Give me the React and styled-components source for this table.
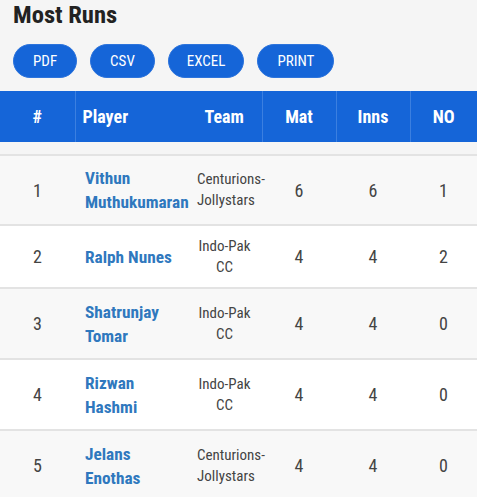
import React from "react";
import styled, { createGlobalStyle } from "styled-components";

const Global = createGlobalStyle`
  html, body { margin: 0; padding: 0; background: #f5f5f5; }
  body { font-family: Roboto, "Liberation Sans", sans-serif; font-stretch: 75%; }
`;

const Page = styled.div`
  width: 477px;
  overflow: hidden;
`;

const Title = styled.h2`
  margin: 0;
  padding: 0 0 0 13px;
  font-size: 24.6px;
  line-height: 29px;
  font-weight: 700;
  color: #222;
`;

const Toolbar = styled.div`
  display: flex;
  gap: 13px;
  padding: 15px 0 0 13px;
  height: 34px;
`;

const Btn = styled.button`
  height: 34px;
  padding: 0 ${(p) => p.$px}px;
  border-radius: 17px;
  border: 1px solid #2d74dc;
  background: #1565d8;
  color: #fff;
  font-family: inherit;
  font-stretch: 75%;
  font-size: 15px;
`;

const Table = styled.table`
  margin-top: 13px;
  width: 477px;
  border-collapse: collapse;
  table-layout: fixed;
`;

const Th = styled.th`
  background: #1565d8;
  color: #fff;
  height: 51px;
  padding: 0 ${(p) => (p.$align === "left" ? "7px" : "0")};
  font-size: 18px;
  font-weight: 700;
  text-align: ${(p) => p.$align || "center"};
  border-left: ${(p) => (p.$line ? "1px solid #3b7fe0" : "none")};
`;

const Spacer = styled.tr`
  height: 13px;
  td { border-bottom: 2px solid #e3e3e3; padding: 0; }
`;

const Row = styled.tr`
  background: ${(p) => (p.$odd ? "#f8f8f8" : "#ffffff")};
  height: ${(p) => p.$h}px;
  td { border-bottom: 2px solid #e3e3e3; }
`;

const Td = styled.td`
  text-align: center;
  color: #444;
  font-size: 18px;
  padding: 0;
`;

const NameCell = styled.td`
  padding: 0 0 0 10px;
  color: #2f78be;
  font-weight: 700;
  font-size: 17.3px;
  line-height: 24px;
  white-space: nowrap;
`;

const TeamCell = styled.td`
  text-align: center;
  color: #444;
  font-size: 15px;
  line-height: 21px;
  padding: 0 10px;
`;

const rows = [
  { n: 1, name: ["Vithun", "Muthukumaran"], team: "Centurions-Jollystars", mat: 6, inns: 6, no: 1, h: 70 },
  { n: 2, name: ["Ralph Nunes"], team: "Indo-Pak CC", mat: 4, inns: 4, no: 2, h: 63 },
  { n: 3, name: ["Shatrunjay", "Tomar"], team: "Indo-Pak CC", mat: 4, inns: 4, no: 0, h: 71 },
  { n: 4, name: ["Rizwan", "Hashmi"], team: "Indo-Pak CC", mat: 4, inns: 4, no: 0, h: 71 },
  { n: 5, name: ["Jelans", "Enothas"], team: "Centurions-Jollystars", mat: 4, inns: 4, no: 0, h: 71 },
];

const lines = (arr) =>
  arr.map((t, i) => (
    <React.Fragment key={i}>
      {i > 0 && <br />}
      {t}
    </React.Fragment>
  ));

export default function App() {
  return (
    <Page>
      <Global />
      <Title>Most Runs</Title>
      <Toolbar>
        <Btn $px={19}>PDF</Btn>
        <Btn $px={19}>CSV</Btn>
        <Btn $px={18}>EXCEL</Btn>
        <Btn $px={19}>PRINT</Btn>
      </Toolbar>
      <Table>
        <colgroup>
          <col style={{ width: 75 }} />
          <col style={{ width: 112 }} />
          <col style={{ width: 75 }} />
          <col style={{ width: 74 }} />
          <col style={{ width: 74 }} />
          <col style={{ width: 67 }} />
        </colgroup>
        <thead>
          <tr>
            <Th>#</Th>
            <Th $align="left" $line>Player</Th>
            <Th>Team</Th>
            <Th $line>Mat</Th>
            <Th $line>Inns</Th>
            <Th $line>NO</Th>
          </tr>
        </thead>
        <tbody>
          <Spacer>
            <td colSpan={6} />
          </Spacer>
          {rows.map((r, i) => (
            <Row key={r.n} $odd={i % 2 === 0} $h={r.h}>
              <Td>{r.n}</Td>
              <NameCell>{lines(r.name)}</NameCell>
              <TeamCell>{r.team}</TeamCell>
              <Td>{r.mat}</Td>
              <Td>{r.inns}</Td>
              <Td>{r.no}</Td>
            </Row>
          ))}
        </tbody>
      </Table>
    </Page>
  );
}
